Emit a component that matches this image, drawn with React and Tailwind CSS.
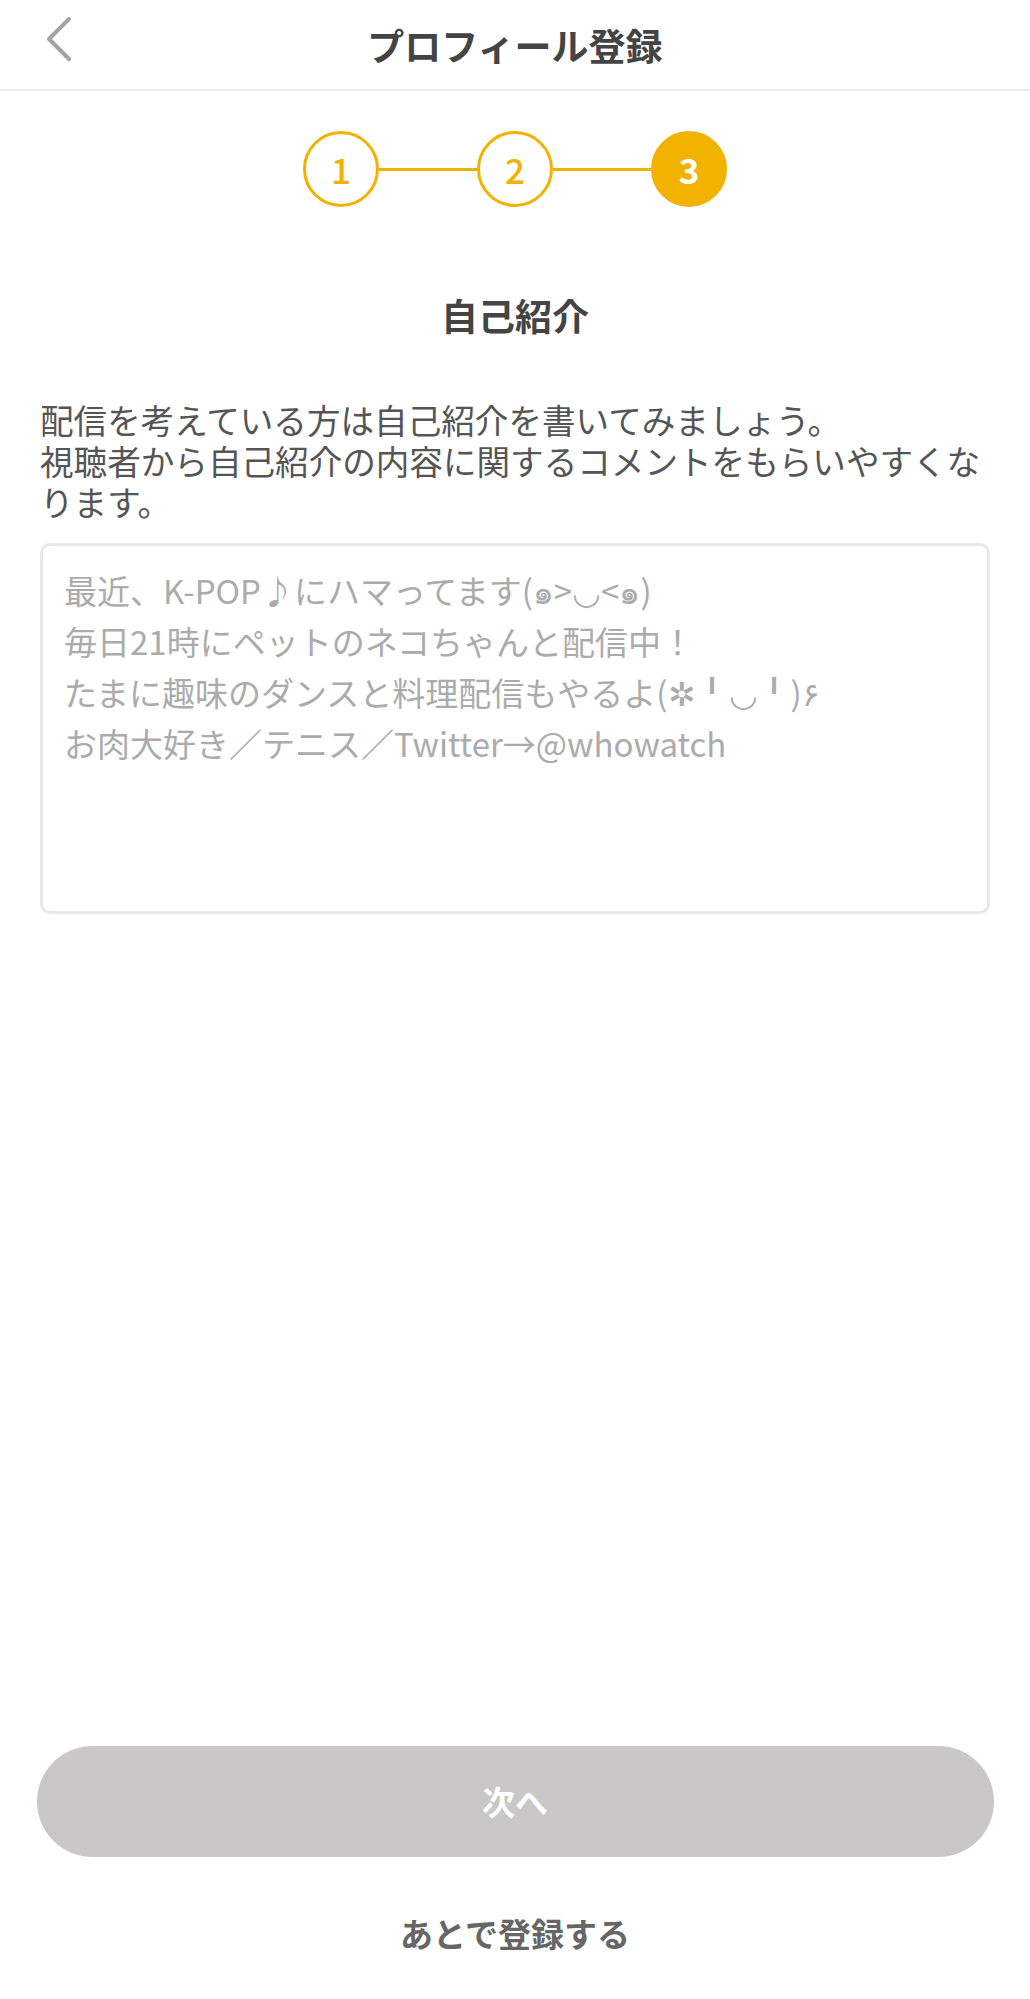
const font = { fontFamily: '"Noto Sans CJK JP", "Noto Sans", sans-serif' }

const placeholder =
  '最近、K-POP♪にハマってます(๑>◡<๑)\n毎日21時にペットのネコちゃんと配信中！\nたまに趣味のダンスと料理配信もやるよ(✲╹◡╹)۶\nお肉大好き／テニス／Twitter→@whowatch'

function Step({ n, active }) {
  return (
    <div
      className={
        active
          ? 'flex h-[76px] w-[76px] items-center justify-center rounded-full border-[3px] border-[#f2b200] bg-[#f2b200] text-[35px] font-bold text-white'
          : 'flex h-[76px] w-[76px] items-center justify-center rounded-full border-[3px] border-[#f2b200] bg-white text-[35px] font-medium text-[#f2b200]'
      }
    >
      {n}
    </div>
  )
}

export default function App() {
  return (
    <div className="flex min-h-[1999px] w-full flex-col bg-white" style={font}>
      <header className="relative flex h-[91px] items-center justify-center border-b-2 border-[#ebebeb]">
        <button className="absolute left-[44px] top-[16px] p-0" aria-label="戻る">
          <svg width="30" height="46" viewBox="0 0 30 46" fill="none">
            <polyline
              points="25,3 5,23 25,43"
              stroke="#a3a3a3"
              strokeWidth="4"
              strokeLinecap="round"
              strokeLinejoin="round"
            />
          </svg>
        </button>
        <h1 className="text-[37px] leading-[44px] font-bold text-[#444444]">プロフィール登録</h1>
      </header>

      <div className="mt-[40px] flex items-center justify-center">
        <Step n="1" />
        <div className="h-[3px] w-[98px] bg-[#f2b200]" />
        <Step n="2" />
        <div className="h-[3px] w-[98px] bg-[#f2b200]" />
        <Step n="3" active />
      </div>

      <h2 className="mt-[86px] text-center text-[37px] leading-[44px] font-bold text-[#444444]">自己紹介</h2>

      <p className="mx-[40px] mt-[62px] text-[33.6px] leading-[41px] whitespace-nowrap text-[#555555]">
        配信を考えている方は自己紹介を書いてみましょう。
        <br />
        視聴者から自己紹介の内容に関するコメントをもらいやすくな
        <br />
        ります。
      </p>

      <textarea
        className="mx-[40px] mt-[21px] h-[371px] resize-none rounded-[10px] border-[3px] border-[#e8e8e8] px-[21px] pt-[19px] text-[33px] leading-[51px] text-[#444444] outline-none placeholder:text-[#ababab]"
        placeholder={placeholder}
      />

      <div className="flex-1" />

      <div className="flex flex-col items-center pb-[44px]">
        <button className="h-[111px] w-[957px] rounded-full bg-[#c9c8c6] text-[33px] font-bold text-white">
          次へ
        </button>
        <button className="mt-[54px] text-[33px] leading-[44px] font-bold text-[#666666]">あとで登録する</button>
      </div>
    </div>
  )
}
